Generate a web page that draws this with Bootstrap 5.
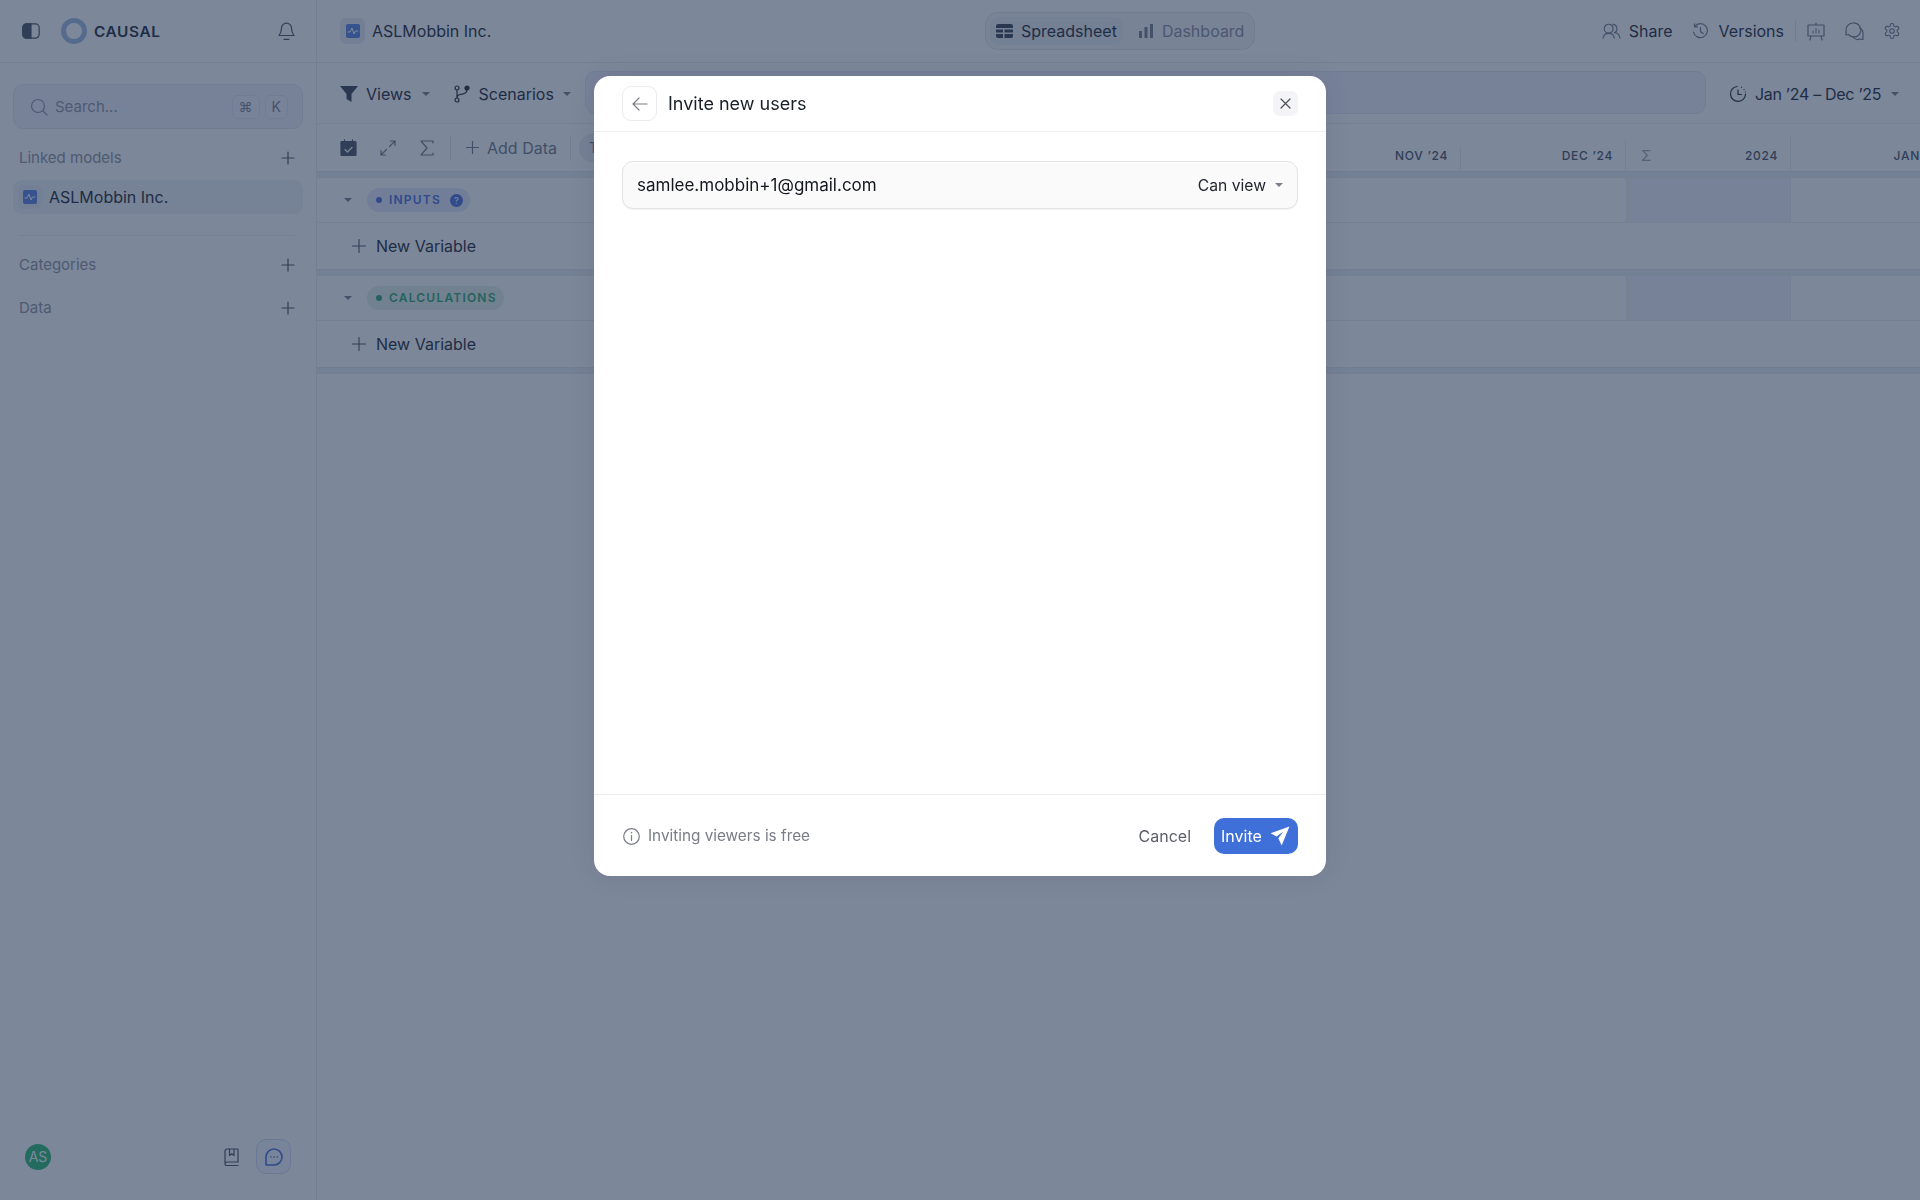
<!DOCTYPE html>
<html lang="en">
<head>
  <meta charset="UTF-8" />
  <title>Causal - Invite new users</title>
  <link href="https://cdn.jsdelivr.net/npm/bootstrap@5.3.0/dist/css/bootstrap.min.css" rel="stylesheet">
  <style>
    html, body { height: 100%; }
    body { font-family: Inter, "Liberation Sans", sans-serif; font-size: 16px; color: #1f2937; background: #fff; overflow: hidden; }
    svg { display: block; flex: none; fill: none; stroke: currentColor; stroke-width: 1.2; stroke-linecap: round; stroke-linejoin: round; }

    /* frame */
    .app-frame { height: 1200px; }
    .side { width: 317px; border-right: 1px solid #ebebeb; flex: none; }
    .side-top { height: 63px; border-bottom: 1px solid #ebebeb; padding: 0 21px 0 22px; color: #4b5262; }
    .main-area { min-width: 0; }
    .brand-ring { width: 26px; height: 26px; border-radius: 50%; border: 5px solid #a3bce4; margin-left: 21px; }
    .brand-name { font-size: 14px; font-weight: 600; letter-spacing: .04em; margin-left: 7px; color: #1f2937; transform: scaleX(1.1); transform-origin: left; }
    .search-box { height: 45px; margin: 21px 13px 0; padding: 0 14px 0 16px; border: 1px solid #e6e8f4; border-radius: 10px; background: #f2f3ff; color: #9194a2; }
    .search-label { margin-left: 7px; font-size: 15px; padding-top: 1px; }
    .key-cap { height: 24px; padding: 0 6px; border: 1px solid #e3e5f0; border-radius: 6px; font-size: 14px; line-height: 22px; color: #7f8394; background: #f5f6ff; }
    .side-label { padding: 0 21px 0 19px; height: 20px; font-size: 15px; color: #9194a2; }
    .plus-dark { color: #4b5262; }
    .side-item { height: 34px; margin: 12px 13px 0; padding-left: 5px; border-radius: 9px; background: #f1f2f5; font-size: 16px; }
    .model-icon { width: 24px; height: 24px; border-radius: 6px; background: #eaecf5; margin-right: 7px; }
    .model-tile { width: 14px; height: 14px; border-radius: 2px; background: #5a84e6; color: #fff; }
    .side-rule { border-top: 1px solid #ebebeb; margin: 21px 21px 19px 19px; }
    .side-foot { padding: 0 25px 26px 25px; }
    .avatar-dot { width: 26px; height: 26px; border-radius: 50%; background: #2cbd75; color: #fff; font-size: 14px; font-weight: 400; }
    .help-btn { width: 35px; height: 35px; border: 1px solid #d6daf0; border-radius: 10px; background: #f6f7ff; color: #4a6ee0; }

    .top-row { height: 63px; border-bottom: 1px solid #ebebeb; padding-left: 23px; }
    .top-model { width: 200px; font-size: 16px; }
    .top-model .model-icon { width: 25px; height: 26px; }
    .tab-track { position: absolute; left: 985px; top: 12px; width: 270px; height: 38px; padding: 4px; border: 1px solid #e4e6ee; border-radius: 13px; background: #f5f5f8; }
    .tab-pill { height: 28px; padding: 0 6px; border-radius: 9px; font-size: 16px; }
    .tab-pill.is-on { background: #eceef4; }
    .tab-pill.is-off { color: #8b8e9e; margin-left: 9px; padding-right: 4px; }
    .top-tools { margin-left: auto; padding-right: 19px; font-size: 16px; }
    .tool-rule { width: 1px; height: 22px; background: #e4e4e8; margin: 0 11px; }
    .tool-soft { color: #73798a; }

    .view-row { height: 61px; border-bottom: 1px solid #ebebeb; padding: 2px 0 0 23px; font-size: 16px; }
    .caret-down { width: 0; height: 0; border-left: 4px solid transparent; border-right: 4px solid transparent; border-top: 4px solid #777e8c; }
    .filter-bar { position: absolute; left: 585px; top: 71px; width: 1121px; height: 43px; border: 1px solid #e6e8f4; border-radius: 10px; background: #f2f3ff; }
    .date-pick { position: absolute; left: 1729px; top: 72px; height: 43px; letter-spacing: -.3px; }

    .grid-tools { height: 47px; padding-left: 23px; font-size: 16px; color: #73798a; }
    .tool-gap { width: 1px; height: 24px; background: #e4e4e8; }
    .stub-chip { width: 60px; height: 30px; border-radius: 15px; background: #eceef4; padding-left: 10px; line-height: 30px; font-size: 14px; margin-left: 8px; }
    .month-head { position: absolute; top: 147px; height: 23px; width: 165px; border-right: 1px solid #ebebeb; padding: 1px 12px 0 0; text-align: right; font-size: 12px; font-weight: 500; letter-spacing: .06em; color: #4b5262; line-height: 16px; white-space: nowrap; }
    .band { height: 7px; background: #eceef1; border-top: 1px solid #e6e7eb; border-bottom: 1px solid #ebebeb; }
    .sheet-row { height: 45px; border-bottom: 1px solid #ebebeb; }
    .sheet-lead { width: 1309px; flex: none; padding-left: 27px; }
    .sum-cell { width: 165px; flex: none; background: #f2f3ff; border-left: 1px solid #ebebeb; border-right: 1px solid #ebebeb; }
    .add-row { height: 46px; padding-left: 35px; font-size: 16px; }
    .group-tag { height: 24px; margin-left: 15px; padding: 0 7px 0 9px; border-radius: 12px; font-size: 12px; font-weight: 600; letter-spacing: .1em; }
    .group-tag .tag-dot { width: 6px; height: 6px; border-radius: 50%; background: currentColor; margin-right: 7px; }
    .tag-blue { background: #e6e9fb; color: #4a6ee0; }
    .tag-green { background: #e4f1ea; color: #30a870; }
    .tag-help { width: 13px; height: 13px; border-radius: 50%; background: #4a6ee0; color: #dfe6ff; font-size: 9px; line-height: 13px; text-align: center; margin-left: 9px; letter-spacing: 0; }

    /* dimmed page and dialog */
    .modal-backdrop { --bs-backdrop-bg: rgb(30, 48, 79); --bs-backdrop-opacity: .58; }
    .invite-dialog { max-width: 732px; margin: 76px auto 0; }
    .invite-dialog .modal-content { height: 800px; border: 0; border-radius: 16px; box-shadow: 0 0 24px rgba(30,48,79,.12); }
    .invite-dialog .modal-header { height: 56px; padding: 0 28px; border-bottom: 1px solid #f0f0f2; }
    .back-btn { width: 35px; height: 35px; border: 1px solid #ececee; border-radius: 9px; background: #fff; color: #7b7f8a; padding: 0; }
    .invite-title { font-size: 18px; font-weight: 400; margin-left: 11px; color: #1b1f29; }
    .close-btn { width: 25px; height: 25px; margin-left: auto; border: 0; border-radius: 7px; background: #f4f4f6; color: #4a4e59; padding: 0; }
    .invite-dialog .modal-body { padding: 29px 28px 0; }
    .invite-field { height: 48px; padding: 1px 14px 0 14px; border: 1px solid #e5e5e7; border-radius: 11px; background: #fafafa; box-shadow: 0 1px 1px rgba(0,0,0,.05); font-size: 17px; color: #14171f; }
    .role-pick { font-size: 15.7px; color: #23262f; }
    .invite-dialog .modal-footer { height: 82px; padding: 0 28px; border-top: 1px solid #ececee; flex-wrap: nowrap; }
    .free-note { font-size: 15.3px; color: #7a7d87; padding: 2px 0 0 1px; }
    .cancel-btn { border: 0; background: none; padding: 0; font-size: 16px; color: #5d6069; }
    .invite-btn { height: 36px; width: 84px; padding: 0 8px 0 7px; border: 0; border-radius: 10px; background: #3f6fd8; color: #fff; font-size: 16px; }
  </style>
</head>
<body>
  <div class="app-frame d-flex">
    <aside class="side d-flex flex-column">
      <div class="side-top d-flex align-items-center">
        <svg width="18" height="16" viewBox="0 0 18 16"><rect x=".8" y=".8" width="16.400" height="14.400" rx="4" /><path d="M4.500 .8h4.500v14.400h-4.500a3.700 3.700 0 0 1-3.700-3.700v-7a3.700 3.700 0 0 1 3.700-3.700z" fill="currentColor" /></svg>
        <div class="brand-ring"></div>
        <span class="brand-name">CAUSAL</span>
        <svg class="ms-auto" width="17" height="19" viewBox="0 0 17 19"><path d="M8.500 1.200a5 5 0 0 0-5 5c0 4-1.500 6-2.500 7.300h15c-1-1.300-2.500-3.300-2.500-7.300a5 5 0 0 0-5-5z" /><path d="M6 17.300h5" /></svg>
      </div>
      <div class="search-box d-flex align-items-center">
        <svg width="18" height="18" viewBox="0 0 18 18"><circle cx="8" cy="8" r="6.500" /><path d="M13 13l4 4" /></svg>
        <span class="search-label">Search...</span>
        <span class="key-cap ms-auto">⌘</span>
        <span class="key-cap" style="margin-left:5px">K</span>
      </div>
      <div class="side-label d-flex align-items-center justify-content-between" style="margin-top:19px">
        <span>Linked models</span>
        <svg class="plus-dark" width="14" height="14" viewBox="0 0 14 14"><path d="M7 1v12M1 7h12" /></svg>
      </div>
      <div class="side-item d-flex align-items-center">
        <span class="model-icon d-flex align-items-center justify-content-center">
          <svg class="model-tile" viewBox="0 0 14 14" style="stroke-width:1"><path d="M2 8h2l2-4 2 6 1.500-3H12" /></svg>
        </span>
        ASLMobbin Inc.
      </div>
      <div class="side-rule"></div>
      <div class="side-label d-flex align-items-center justify-content-between">
        <span>Categories</span>
        <svg class="plus-dark" width="14" height="14" viewBox="0 0 14 14"><path d="M7 1v12M1 7h12" /></svg>
      </div>
      <div class="side-label d-flex align-items-center justify-content-between" style="margin-top:23px">
        <span>Data</span>
        <svg class="plus-dark" width="14" height="14" viewBox="0 0 14 14"><path d="M7 1v12M1 7h12" /></svg>
      </div>
      <div class="side-foot d-flex align-items-center mt-auto">
        <div class="avatar-dot d-flex align-items-center justify-content-center">AS</div>
        <svg class="ms-auto plus-dark" style="margin-right:17px" width="15" height="18" viewBox="0 0 15 18"><path d="M1 15V3a2 2 0 0 1 2-2h11v13H3a2 2 0 0 0-2 2 1.500 1.500 0 0 0 1.500 1.500H14" /><path d="M5.500 1v6.500l2.300-1.700 2.200 1.700V1" /></svg>
        <div class="help-btn d-flex align-items-center justify-content-center">
          <svg width="18" height="18" viewBox="0 0 18 18" style="stroke-width:1.600"><path d="M1 17V9a8 8 0 1 1 8 8z" /><path d="M5.800 9h.1M9 9h.1M12.200 9h.1" /></svg>
        </div>
      </div>
    </aside>

    <main class="main-area flex-grow-1 d-flex flex-column">
      <div class="top-row d-flex align-items-center">
        <div class="top-model d-flex align-items-center">
          <span class="model-icon d-flex align-items-center justify-content-center">
            <svg class="model-tile" viewBox="0 0 14 14" style="stroke-width:1"><path d="M2 8h2l2-4 2 6 1.500-3H12" /></svg>
          </span>
          ASLMobbin Inc.
        </div>
        <div class="tab-track d-flex align-items-center">
          <div class="tab-pill is-on d-flex align-items-center gap-2">
            <svg width="17" height="14" viewBox="0 0 17 14" style="stroke:none;fill:#3b4252"><path d="M2 0h13a2 2 0 0 1 2 2v2H0V2a2 2 0 0 1 2-2zM0 5.500h7v3H0zM8.500 5.500H17v3H8.500zM0 10h7v4H2a2 2 0 0 1-2-2zM8.500 10H17v2a2 2 0 0 1-2 2H8.500z" /></svg>
            Spreadsheet
          </div>
          <div class="tab-pill is-off d-flex align-items-center gap-2">
            <svg width="16" height="16" viewBox="0 0 16 16" style="stroke:none;fill:#777e8c"><path d="M1 8h3v7H1zM6.500 4h3v11h-3zM12 1h3v14h-3z" /></svg>
            Dashboard
          </div>
        </div>
        <div class="top-tools d-flex align-items-center">
          <svg class="tool-soft" width="19" height="16" viewBox="0 0 20 17"><circle cx="7" cy="6" r="4.700" /><path d="M1 16c.5-3 2.500-5 6-5s5.500 2 6 5" /><path d="M11.500 1.400a4.700 4.700 0 0 1 1.500 9c3.500 0 5.500 2.600 6 5.600" /></svg>
          <span class="ms-2">Share</span>
          <svg class="tool-soft" style="margin-left:19px" width="17" height="17" viewBox="0 0 17 17"><path d="M2.700 3.500A7 7 0 1 1 1.500 9" /><path d="M2.500 .8v3h3" /><path d="M8.500 4.500v4.200l2.800 1.800" /></svg>
          <span style="margin-left:10px">Versions</span>
          <span class="tool-rule"></span>
          <svg class="tool-soft" width="18" height="19" viewBox="0 0 18 19"><path d="M1 3h16v11H1zM9 1v2M4 14l-1 4M14 14l1 4" /><path d="M6 11V9M9 11V6.500M12 11V8" style="stroke-width:1" /></svg>
          <svg class="tool-soft" style="margin-left:20px" width="19" height="19" viewBox="0 0 19 19"><path d="M8 1a7 7 0 0 0-7 7v5l2.500-.5A7 7 0 1 0 8 1z" /><path d="M14.500 6a6 6 0 0 1 3.500 6v5.500L15 17a6 6 0 0 1-7-2" /></svg>
          <svg class="tool-soft" style="margin-left:19px;stroke-width:1.500" width="18" height="18" viewBox="0 0 24 24"><path d="M12.220 2h-.44a2 2 0 0 0-2 2v.18a2 2 0 0 1-1 1.730l-.43.250a2 2 0 0 1-2 0l-.15-.08a2 2 0 0 0-2.730.730l-.22.380a2 2 0 0 0 .73 2.730l.15.100a2 2 0 0 1 1 1.720v.510a2 2 0 0 1-1 1.740l-.15.090a2 2 0 0 0-.73 2.730l.22.380a2 2 0 0 0 2.730.730l.15-.08a2 2 0 0 1 2 0l.43.250a2 2 0 0 1 1 1.730V20a2 2 0 0 0 2 2h.44a2 2 0 0 0 2-2v-.18a2 2 0 0 1 1-1.730l.43-.25a2 2 0 0 1 2 0l.15.080a2 2 0 0 0 2.730-.73l.22-.39a2 2 0 0 0-.73-2.730l-.15-.08a2 2 0 0 1-1-1.740v-.5a2 2 0 0 1 1-1.740l.15-.09a2 2 0 0 0 .73-2.730l-.22-.38a2 2 0 0 0-2.730-.73l-.15.080a2 2 0 0 1-2 0l-.43-.25a2 2 0 0 1-1-1.730V4a2 2 0 0 0-2-2z" /><circle cx="12" cy="12" r="3" /></svg>
        </div>
      </div>

      <div class="view-row d-flex align-items-center">
        <svg width="18" height="18" viewBox="0 0 18 18" style="stroke:none;fill:#3b4252"><path d="M0 1h18l-6.500 8v8l-5-3V9z" /></svg>
        <span style="margin-left:8px">Views</span>
        <span class="caret-down" style="margin-left:10px"></span>
        <svg style="margin-left:24px" width="16" height="18" viewBox="0 0 16 18"><circle cx="3" cy="3" r="2" /><circle cx="3" cy="15" r="2" /><circle cx="13" cy="3" r="2" fill="currentColor" /><path d="M3 5v8M13 5c0 4-4 4-7 4.500-2 .3-3 1.500-3 3.500" /></svg>
        <span style="margin-left:9px">Scenarios</span>
        <span class="caret-down" style="margin-left:9px"></span>
      </div>
      <div class="filter-bar"></div>
      <div class="date-pick d-flex align-items-center">
        <svg width="18" height="18" viewBox="0 0 18 18"><path d="M8 1.500A7.500 7.500 0 1 0 16.500 9" /><path d="M9 5v4.500h3.500" /><path d="M12.500 2.200h.1M15 4.500h.1M16.300 7h.1" /></svg>
        <span style="margin-left:8px">Jan ’24 – Dec ’25</span>
        <span class="caret-down" style="margin-left:10px"></span>
      </div>

      <div class="grid-tools d-flex align-items-center">
        <svg width="17" height="17" viewBox="0 0 17 17" style="color:#4b5262"><path d="M2 2.500h13a1 1 0 0 1 1 1v12a1 1 0 0 1-1 1H2a1 1 0 0 1-1-1v-12a1 1 0 0 1 1-1z" fill="currentColor" /><path d="M4.500 .8v3M12.500 .8v3" /><path d="M5 10.500l2.500 2.500 4.500-4.500" stroke="#fff" /></svg>
        <svg style="margin-left:23px" width="16" height="16" viewBox="0 0 16 16"><path d="M9.500 6.500L15 1M10.500 1H15v4.500M6.500 9.500L1 15M1 10.500V15h4.500" /></svg>
        <svg style="margin-left:24px" width="14" height="16" viewBox="0 0 14 16"><path d="M13 3V1H1l6 7-6 7h12v-2" /></svg>
        <span class="tool-gap" style="margin-left:16px"></span>
        <svg style="margin-left:15px" width="13" height="13" viewBox="0 0 13 13"><path d="M6.500 .5v12M.5 6.500h12" /></svg>
        <span style="margin-left:8px">Add Data</span>
        <span class="tool-gap" style="margin-left:13px"></span>
        <span class="stub-chip">T</span>
      </div>
      <div class="month-head" style="left:1296px">NOV ’24</div>
      <div class="month-head" style="left:1461px;top:140px;height:30px;padding-top:8px">DEC ’24</div>
      <div class="month-head d-flex justify-content-between" style="left:1626px;top:136px;height:34px;padding:12px 12px 0 15px"><span style="color:#a5a8b4;font-size:15px;font-weight:400">Σ</span><span>2024</span></div>
      <div class="month-head" style="left:1791px;width:129px;border:0;padding-right:0">JAN</div>

      <div class="band"></div>
      <div class="sheet-row d-flex">
        <div class="sheet-lead d-flex align-items-center">
          <span class="caret-down"></span>
          <span class="group-tag tag-blue d-flex align-items-center"><span class="tag-dot"></span>INPUTS<span class="tag-help">?</span></span>
        </div>
        <div class="sum-cell"></div>
      </div>
      <div class="add-row d-flex align-items-center">
        <svg width="14" height="14" viewBox="0 0 15 15" class="plus-dark"><path d="M7.500 .5v14M.5 7.500h14" /></svg>
        <span style="margin-left:10px">New Variable</span>
      </div>
      <div class="band"></div>
      <div class="sheet-row d-flex">
        <div class="sheet-lead d-flex align-items-center">
          <span class="caret-down"></span>
          <span class="group-tag tag-green d-flex align-items-center"><span class="tag-dot"></span>CALCULATIONS</span>
        </div>
        <div class="sum-cell"></div>
      </div>
      <div class="add-row d-flex align-items-center">
        <svg width="14" height="14" viewBox="0 0 15 15" class="plus-dark"><path d="M7.500 .5v14M.5 7.500h14" /></svg>
        <span style="margin-left:10px">New Variable</span>
      </div>
      <div class="band"></div>
    </main>
  </div>

  <div class="modal-backdrop show"></div>
  <div class="modal d-block" tabindex="-1" role="dialog">
    <div class="modal-dialog invite-dialog">
      <div class="modal-content">
        <div class="modal-header">
          <button type="button" class="back-btn d-flex align-items-center justify-content-center">
            <svg width="16" height="14" viewBox="0 0 16 14"><path d="M15 7H1M7 1L1 7l6 6" /></svg>
          </button>
          <h5 class="invite-title mb-0">Invite new users</h5>
          <button type="button" class="close-btn d-flex align-items-center justify-content-center">
            <svg width="11" height="11" viewBox="0 0 11 11"><path d="M1 1l9 9M10 1l-9 9" /></svg>
          </button>
        </div>
        <div class="modal-body">
          <div class="invite-field d-flex align-items-center justify-content-between">
            <span>samlee.mobbin+1@gmail.com</span>
            <span class="role-pick d-flex align-items-center">Can view<span class="caret-down" style="margin-left:9px"></span></span>
          </div>
        </div>
        <div class="modal-footer">
          <div class="free-note d-flex align-items-center me-auto m-0">
            <svg class="me-2" width="17" height="17" viewBox="0 0 17 17"><circle cx="8.500" cy="8.500" r="7.800" /><path d="M8.500 7.500v5" /><path d="M8.500 4.700h.1" style="stroke-width:1.600" /></svg>
            Inviting viewers is free
          </div>
          <button type="button" class="cancel-btn m-0">Cancel</button>
          <button type="button" class="invite-btn d-flex align-items-center justify-content-between m-0" style="margin-left:23px !important">
            Invite
            <svg width="20" height="20" viewBox="0 0 18 18" style="stroke:none;fill:#fff"><path d="M17.500 .5L.5 6.500l5.500 3 6-4.500-4.500 6 3 6.500z" /></svg>
          </button>
        </div>
      </div>
    </div>
  </div>

  <script src="https://cdn.jsdelivr.net/npm/bootstrap@5.3.0/dist/js/bootstrap.bundle.min.js"></script>
</body>
</html>
